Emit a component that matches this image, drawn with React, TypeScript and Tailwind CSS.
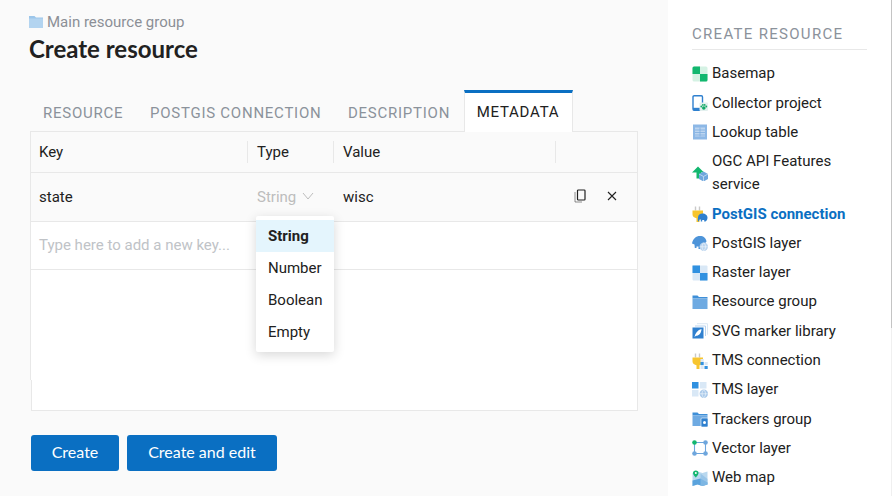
import React from "react";

const Plug = () => (
  <>
    <path d="M3.500 0.500v4M7.500 0.500v4" stroke="#c9c9c9" strokeWidth="1.400" />
    <path d="M0.500 4.500h10.500v4c0 2-1.800 3.500-3.500 3.700V16H4.500v-3.800C2.500 12 .5 10.500 .5 8.500z" fill="#f7c52f" />
  </>
);
const Elephant = ({ c = "#2f80cf" }: { c?: string }) => (
  <path d="M6 11.500c0-2.500 2-4 4.500-4 2.800 0 5 1.700 5 4.300 0 1.500-.7 3-2 3.700h-1.300v-1.500h-2V15.500H8.800v-2H7.500c-.2 1-.5 1.800-1.300 2.200-.6-1.200-.2-2.600-.2-4.200z" fill={c} />
);
const Globe = ({ c = "#b9d3ee" }: { c?: string }) => (
  <>
    <circle cx="11.800" cy="11.800" r="4.200" fill={c} />
    <path d="M7.800 11.800h8M11.800 7.800c-2.300 2.400-2.300 5.600 0 8 2.300-2.400 2.300-5.600 0-8" stroke="#eef5fb" strokeWidth=".7" fill="none" />
  </>
);

const icons: Record<string, React.ReactNode> = {
  basemap: (
    <>
      <rect x="0.500" y="0.500" width="15" height="15" rx="1.500" fill="#d5f2e4" />
      <path d="M2 .5h6V8H.5V2A1.500 1.500 0 0 1 2 .5z" fill="#12b76f" />
      <path d="M8 8h7.500v6a1.500 1.500 0 0 1-1.500 1.500H8z" fill="#12b76f" />
    </>
  ),
  collector: (
    <>
      <rect x="1" y="0.700" width="9.500" height="14.600" rx="1.200" fill="none" stroke="#2f80cf" strokeWidth="1.400" />
      <rect x="1" y="12.800" width="9.500" height="2.500" fill="#2f80cf" />
      <rect x="7.500" y="7.500" width="8.500" height="8.500" rx="1" fill="#e3f0ee" />
      <circle cx="11.800" cy="13" r="1.800" fill="#12a866" />
      <circle cx="9.300" cy="11.500" r=".9" fill="#12a866" />
      <circle cx="10.900" cy="9.900" r=".9" fill="#12a866" />
      <circle cx="12.700" cy="9.900" r=".9" fill="#12a866" />
      <circle cx="14.300" cy="11.500" r=".9" fill="#12a866" />
    </>
  ),
  lookup: (
    <>
      <rect x="1" y="0.500" width="14" height="15" fill="#8db8e6" />
      <path d="M3 3.500h10v9H3z" fill="#bcd5f0" />
      <path d="M3 6h10M3 8.500h10M3 11h10M8 3.500v9" stroke="#7fade0" strokeWidth=".8" />
    </>
  ),
  ogc: (
    <>
      <path d="M6 1.500 12 7.500H9v6H4.500v-6H0z" fill="#12b76f" />
      <path d="M11.500 6.500 16 9v5l-4.500 2.500L7 14V9z" fill="#6ea6dd" />
      <path d="M7 9l4.500 2.500L16 9M11.500 11.500v5" stroke="#d7e7f6" strokeWidth=".7" fill="none" />
    </>
  ),
  pgconn: (
    <>
      <Plug />
      <Elephant />
    </>
  ),
  pglayer: (
    <>
      <path d="M0 8.500C1 3.500 4 1 8 1c3.500 0 6 2 6.500 5.500L8 14H6.500v-2.500H4.500V13H2.800l-.3-3.500z" fill="#4d94d9" />
      <Globe />
    </>
  ),
  raster: (
    <>
      <rect x="0.500" y="0.500" width="15" height="15" rx="1" fill="#d9e8f6" />
      <rect x="0.500" y="0.500" width="7.500" height="7.500" fill="#3191e0" />
      <rect x="8" y="8" width="7.500" height="7.500" fill="#3191e0" />
    </>
  ),
  folder: (
    <>
      <path d="M0.500 1.500h5L7 3h8.500v1.500H.5z" fill="#3e8fd8" />
      <rect x="0.500" y="4.500" width="15" height="10.500" fill="#6eaae2" />
    </>
  ),
  svg: (
    <>
      <path d="M5 .7h10.500v11" stroke="#dbe7f3" strokeWidth="1" fill="none" />
      <path d="M3 3h10.500v10" stroke="#b9d3ee" strokeWidth="1" fill="none" />
      <rect x="0.500" y="4.500" width="11" height="11" fill="#2f80cf" />
      <path d="M2.500 14c.7-4 3.200-7 7-8-.2 4-2.500 6.800-5.500 6.800z" fill="#fff" />
    </>
  ),
  tmsconn: (
    <>
      <Plug />
      <rect x="8.500" y="6" width="3.200" height="3.200" fill="#dbe7f3" />
      <rect x="8.500" y="9" width="3.200" height="3.200" fill="#3191e0" />
      <rect x="12.500" y="9" width="3.200" height="3.200" fill="#dbe7f3" />
      <rect x="8.500" y="13" width="3.200" height="3" fill="#dbe7f3" />
      <rect x="12.500" y="13" width="3.200" height="3" fill="#3191e0" />
    </>
  ),
  tmslayer: (
    <>
      <rect x="0" y="0" width="6.500" height="6.500" fill="#3191e0" />
      <rect x="8" y="0" width="6.500" height="6.500" fill="#d9e8f6" />
      <rect x="0" y="8" width="6.500" height="6.500" fill="#d9e8f6" />
      <Globe c="#a9c9ea" />
    </>
  ),
  trackers: (
    <>
      <path d="M0.500 1.500h5L7 3h8.500v1.500H.5z" fill="#3e8fd8" />
      <rect x="0.500" y="4.500" width="15" height="10.500" fill="#6eaae2" />
      <rect x="9" y="7" width="7" height="9" rx="1" fill="#2f80cf" stroke="#fff" strokeWidth=".6" />
      <circle cx="12.500" cy="11.500" r="1.500" fill="#fff" />
    </>
  ),
  vector: (
    <>
      <path d="M2.500 2.500h11v11h-11z" fill="none" stroke="#6ea6dd" strokeWidth="1.100" />
      <circle cx="2.500" cy="2.500" r="2.300" fill="#12b76f" />
      <circle cx="13.500" cy="2.500" r="2.300" fill="#6ea6dd" />
      <circle cx="2.500" cy="13.500" r="2.300" fill="#6ea6dd" />
      <circle cx="13.500" cy="13.500" r="2.300" fill="#6ea6dd" />
    </>
  ),
  webmap: (
    <>
      <path d="M.5 3l5-1.500 5 1.500 5-1.500v13l-5 1.500-5-1.500-5 1.500z" fill="#b9d8ef" />
      <path d="M.5 10.500l8-2 7 4V14.500l-5 1.500-5-1.500-5 1.500z" fill="#5aa3dd" />
      <path d="M8.500 3.500v12l2 .5 5-1.500V9z" fill="#8bbde6" opacity=".7" />
      <path d="M3.800.5C2 .5 1 1.800 1 3c0 1.800 2.800 4.500 2.800 4.500S6.500 4.800 6.500 3C6.500 1.800 5.500.5 3.800.5z" fill="#12b76f" />
      <circle cx="3.800" cy="2.900" r="1" fill="#fff" />
    </>
  ),
};

const items: [string, string][] = [
  ["basemap", "Basemap"],
  ["collector", "Collector project"],
  ["lookup", "Lookup table"],
  ["ogc", "OGC API Features service"],
  ["pgconn", "PostGIS connection"],
  ["pglayer", "PostGIS layer"],
  ["raster", "Raster layer"],
  ["folder", "Resource group"],
  ["svg", "SVG marker library"],
  ["tmsconn", "TMS connection"],
  ["tmslayer", "TMS layer"],
  ["trackers", "Trackers group"],
  ["vector", "Vector layer"],
  ["webmap", "Web map"],
];

const Icon = ({ name }: { name: string }) => (
  <svg viewBox="0 0 16 16" className="h-4 w-4 shrink-0">
    {icons[name]}
  </svg>
);

const tabClass = "flex h-[35px] items-center whitespace-nowrap tracking-[0.75px] text-[#8b929b]";

export default function App() {
  return (
    <div className="flex h-[496px] w-[892px] overflow-hidden bg-white font-['Roboto',sans-serif] text-[15px] text-[#212121]">
      <main className="w-[668px] shrink-0 bg-[#fafafa] px-[30px] pt-[13px]">
        <div className="-ml-px flex h-[18px] items-center gap-[4px] leading-[18px] text-[#8b8f96]">
          <svg viewBox="0 0 14 12" className="h-[12px] w-[14px]">
            <path d="M0 0h5.500L7 1.500h7V3H0z" fill="#9cc6ea" />
            <rect y="2.500" width="14" height="9.500" fill="#b3d4f0" />
          </svg>
          <span>Main resource group</span>
        </div>
        <h1 className="-ml-px mt-[1px] font-['Lato',sans-serif] text-[24px] font-bold leading-[34px] text-[#212121]">
          Create resource
        </h1>
        <div className="relative mt-[24px]">
          <div className="flex h-[41px] items-end pl-px">
            <div className={`w-[107px] pl-[12px] ${tabClass}`}>RESOURCE</div>
            <div className={`w-[198px] pl-[12px] ${tabClass}`}>POSTGIS CONNECTION</div>
            <div className={`w-[128px] pl-[12px] ${tabClass}`}>DESCRIPTION</div>
            <div className="relative z-10 -mb-px flex h-[42px] w-[109px] items-center justify-center border-x border-t-[3px] border-x-[#e8e8e8] border-t-[#0a6fc2] bg-white pr-px tracking-[0.75px] text-[#212121]">METADATA</div>
          </div>
          <div className="h-[249px] w-[608px] border border-b-0 border-[#e8e8e8] bg-white">
            <div className="flex h-[41px] items-center border-b border-[#e8e8e8] bg-[#fafafa]">
              <div className="flex h-[22px] w-[217px] items-center border-r border-[#e8e8e8] pl-2">Key</div>
              <div className="flex h-[22px] w-[86px] items-center border-r border-[#e8e8e8] pl-[9px]">Type</div>
              <div className="flex h-[22px] w-[222px] items-center border-r border-[#e8e8e8] pl-[9px]">Value</div>
            </div>
            <div className="flex h-[49px] items-center border-b border-[#e8e8e8] bg-[#fafafa]">
              <div className="w-[217px] pl-2">state</div>
              <div className="flex w-[86px] items-center gap-[6px] pl-[9px] text-[#bdbdbd]">
                <span>String</span>
                <svg viewBox="0 0 12 8" className="mb-[3px] h-[8px] w-[12px]" fill="none" stroke="#bdbdbd" strokeWidth="1">
                  <path d="M1 1l5 6 5-6" />
                </svg>
              </div>
              <div className="w-[222px] pl-[9px]">wisc</div>
              <div className="flex items-center gap-[21px] pl-[18px]">
                <svg viewBox="0 0 12 14" className="mb-[2px] h-[14px] w-[12px]" fill="none">
                  <rect x="3.500" y="1" width="7.500" height="10" rx=".8" stroke="#212121" strokeWidth="1.200" />
                  <path d="M1 3.500V13h7" stroke="#212121" strokeWidth="1" strokeDasharray="1 1" />
                </svg>
                <svg viewBox="0 0 10 10" className="mb-[2px] h-[10px] w-[10px]" fill="none" stroke="#212121" strokeWidth="1.100">
                  <path d="M1 1l8 8M9 1l-8 8" />
                </svg>
              </div>
            </div>
            <div className="flex h-[48px] items-center border-b border-[#e8e8e8] pl-2 text-[#c0c3c7]">
              Type here to add a new key...
            </div>
          </div>
          <div className="ml-px h-[31px] w-[607px] border border-t-0 border-[#e8e8e8] bg-white" />
          <div className="absolute left-[226px] top-[126px] z-20 w-[78px] rounded-[2px] bg-white py-[4px] shadow-[0_3px_12px_rgba(0,0,0,0.16)]">
            <div className="flex h-[32px] items-center bg-[#e4f5fd] pl-3 font-bold">String</div>
            <div className="flex h-[32px] items-center pl-3">Number</div>
            <div className="flex h-[32px] items-center pl-3">Boolean</div>
            <div className="flex h-[32px] items-center pl-3">Empty</div>
          </div>
        </div>
        <div className="mt-[24px] flex gap-2 pl-px font-['Lato',sans-serif] text-[16px] text-white">
          <button className="h-[36px] w-[88px] rounded-[3px] bg-[#0a6fc2] pb-[2px]">Create</button>
          <button className="h-[36px] w-[150px] rounded-[3px] bg-[#0a6fc2] pb-[2px]">Create and edit</button>
        </div>
      </main>
      <aside className="min-w-0 flex-1 pl-[24px] pr-[24px] pt-[23px]">
        <h2 className="border-b border-[#e8e8e8] pb-[4px] leading-[22px] tracking-[1.3px] text-[#8b929b]">CREATE RESOURCE</h2>
        <ul className="mt-[12.4px] flex flex-col gap-[6.3px] leading-[23px]">
          {items.map(([icon, label]) => {
            const active = label === "PostGIS connection";
            return (
              <li key={label} className={`flex items-center gap-1 ${active ? "font-bold text-[#0a6fc2]" : "text-[#212121]"}`}>
                <Icon name={icon} />
                <span>{label}</span>
              </li>
            );
          })}
        </ul>
      </aside>
      <div className="h-full w-px shrink-0 bg-[#f0f0f0]">
        <div className="h-[328px] bg-[#c4c4c4]" />
      </div>
    </div>
  );
}
